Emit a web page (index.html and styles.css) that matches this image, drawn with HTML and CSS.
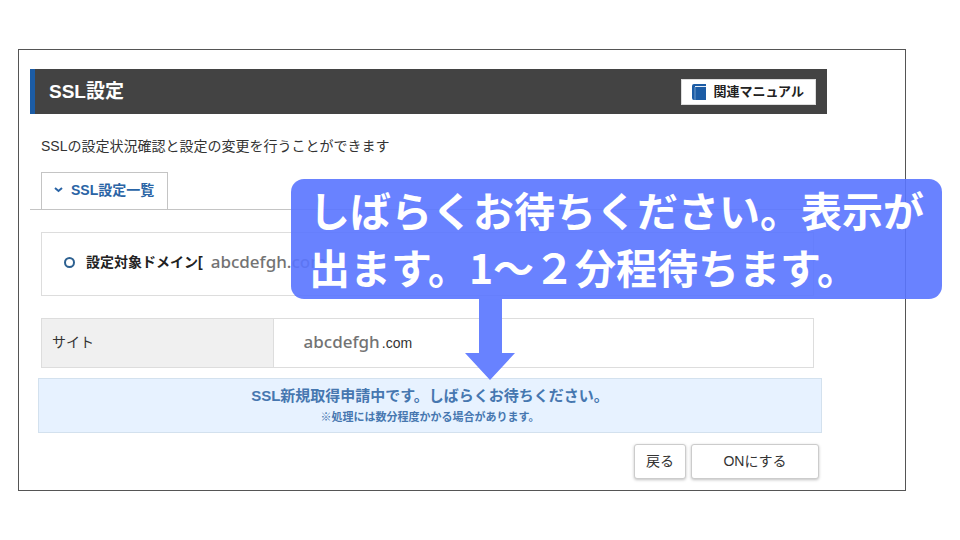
FILE: index.html
```
<!DOCTYPE html>
<html lang="ja">
<head>
  <meta charset="UTF-8">
  <title>SSL設定</title>
  <link rel="stylesheet" href="styles.css">
</head>
<body>
  <div class="frame">
    <header class="header">
      <h1>SSL設定</h1>
      <a class="manual" href="#">
        <svg width="14" height="16" viewBox="0 0 14 16">
          <path d="M2 0h12v2H3v1h11v13H2a2 2 0 0 1-2-2V2a2 2 0 0 1 2-2z" fill="#1c5ca5"/>
          <path d="M3 3v13" stroke="#6f9bcb" fill="none"/>
          <path d="M3 2.500h11" stroke="#e6eef8" fill="none"/>
        </svg>
        関連マニュアル
      </a>
    </header>

    <main>
      <p class="lead">SSLの設定状況確認と設定の変更を行うことができます</p>

      <nav class="tabs">
        <a class="tab" href="#">
          <svg width="9" height="6" viewBox="0 0 9 6"><path d="M1 1l3.500 3L8 1" fill="none" stroke="#2a64a5" stroke-width="2"/></svg>
          SSL設定一覧
        </a>
      </nav>

      <div class="target">
        <span class="ring"></span>
        <strong>設定対象ドメイン[</strong>
        <span class="domain">abcdefgh<span class="tld">.com</span></span>
      </div>

      <table class="site">
        <tr>
          <th scope="row">サイト</th>
          <td><span class="domain">abcdefgh</span><span class="tld">.com</span></td>
        </tr>
      </table>

      <div class="notice">
        <p class="notice-main">SSL新規取得申請中です。しばらくお待ちください。</p>
        <p class="notice-sub">※処理には数分程度かかる場合があります。</p>
      </div>

      <div class="actions">
        <button type="button">戻る</button>
        <button type="button" class="wide">ONにする</button>
      </div>
    </main>
  </div>

  <!-- 吹き出し -->
  <div class="callout">
    しばらくお待ちください。表示が<br>出ます。1～２分程待ちます。
    <svg class="arrow" width="50" height="81" viewBox="0 0 50 81"><path d="M14 0h23v54h13L25 81 0 54h14z" fill="#6882ff"/></svg>
  </div>
</body>
</html>
```
FILE: styles.css
```
* { box-sizing: border-box; }
body {
  margin: 0;
  padding: 49px 54px 49px 18px;
  position: relative;
  background: #fff;
  color: #333;
  font-family: "Liberation Sans", "Noto Sans CJK JP", sans-serif;
  font-size: 14px;
  line-height: 20px;
}
h1, p { margin: 0; }
a { color: inherit; text-decoration: none; }

.frame {
  border: 1px solid #555;
  padding: 19px 78px 11px 11px;
}

/* ヘッダー */
.header {
  display: flex; align-items: center; justify-content: space-between;
  height: 45px;
  padding: 0 11px 0 14px;
  background: #434343;
  border-left: 5px solid #1c5ca5;
  color: #fff;
}
h1 { font-size: 19px; line-height: 28px; }
.manual {
  display: flex; align-items: center; gap: 7px;
  height: 26px;
  padding: 0 11px 0 10px;
  background: #fff;
  border: 1px solid #ddd;
  color: #222;
  font-size: 13px; font-weight: bold;
}

.lead { padding: 22px 11px 16px; }

/* タブ */
.tabs {
  display: flex;
  padding: 0 11px;
  border-bottom: 1px solid #c4c4c4;
}
.tab {
  display: flex; align-items: center; gap: 8px;
  height: 37px;
  padding: 0 13px 2px 12px;
  border: 1px solid #c4c4c4; border-bottom: 0;
  color: #2a64a5;
  font-weight: bold;
}

.target {
  display: flex; align-items: center;
  height: 64px;
  margin: 22px 13px 22px 11px;
  padding: 0 22px 4px;
  border: 1px solid #ddd;
}
.ring {
  width: 11px; height: 11px;
  margin-right: 11px;
  border: 2px solid #2c6090; border-radius: 50%;
}
.target strong { margin-right: 8px; color: #222; }
.domain {
  font-family: "Noto Sans", sans-serif;
  font-size: 17px; font-weight: 500;
  color: #737373;
}

.site {
  width: calc(100% - 24px); height: 50px;
  margin: 0 13px 10px 11px;
  border-collapse: collapse;
}
.site th, .site td { border: 1px solid #ddd; padding: 0 10px 2px; text-align: left; }
.site th { width: 30%; background: #f0f0f0; font-weight: normal; }
.site td { padding-left: 30px; }
.site .tld { margin-left: 2px; }

/* お知らせ */
.notice {
  margin: 0 5px 11px 8px;
  padding: 6px 0 5px;
  background: #e7f2ff;
  border: 1px solid #d3e1ee;
  color: #4677b0;
  text-align: center;
  font-weight: bold;
}
.notice-main { font-size: 15px; line-height: 22px; }
.notice-sub { font-size: 11px; }

.actions {
  display: flex; justify-content: flex-end; gap: 5px;
  padding-right: 8px;
}
button {
  height: 35px;
  padding: 0 11px 2px;
  background: #fff;
  border: 1px solid #ccc; border-radius: 3px;
  box-shadow: 0 1px 3px rgba(0, 0, 0, .25);
  color: #333;
  font: inherit;
}
.wide { width: 128px; }

/* 吹き出し */
.callout {
  position: absolute; top: 179px; left: 291px; right: 18px;
  padding: 2px 0 4px 18px;
  border-radius: 13px;
  background: rgba(90, 118, 255, .91);
  color: #fff;
  font-family: "Noto Sans CJK JP", sans-serif;
  font-size: 41px; line-height: 57px; font-weight: bold;
  white-space: nowrap;
}
.arrow { position: absolute; top: 100%; left: 174px; }
```
